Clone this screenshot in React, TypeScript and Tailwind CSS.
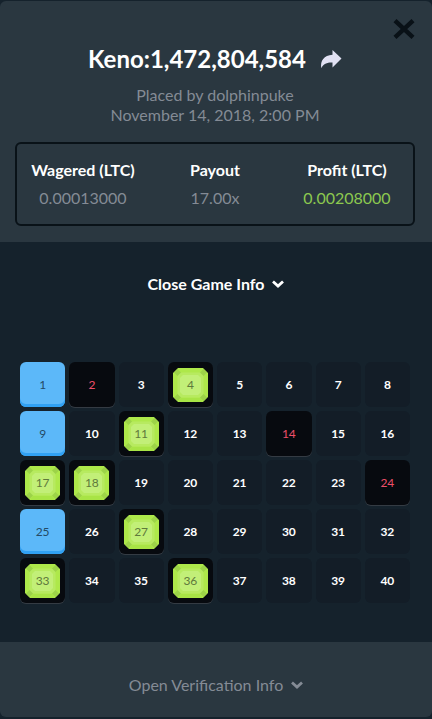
import { useState } from 'react';
import clsx from 'clsx';

interface Stat {
  label: string;
  value: string;
  highlight?: boolean;
}

const stats: Stat[] = [
  { label: 'Wagered (LTC)', value: '0.00013000' },
  { label: 'Payout', value: '17.00x' },
  { label: 'Profit (LTC)', value: '0.00208000', highlight: true }
];

const tiles = Array.from({ length: 40 }, (_, i) => i + 1);
const picked = [1, 4, 9, 11, 17, 18, 25, 27, 33, 36];
const drawn = [2, 4, 11, 14, 17, 18, 24, 27, 33, 36];

const ShareIcon = () => (
  <svg viewBox="0 0 22 20" className="w-[22px] h-5" fill="#e1e1f3" aria-hidden="true">
    <path d="M12.5 1 21.5 9.5 12.5 18.5V13.4C7.5 13.2 3.4 14.4 1.3 19.2 0 12 4 6.2 12.5 5.8Z" />
  </svg>
);

const CloseIcon = () => (
  <svg viewBox="0 0 22 20" className="w-[22px] h-5" stroke="#091117" strokeWidth="4.4" aria-hidden="true">
    <path d="M2 1.6 20 18.4M20 1.6 2 18.4" />
  </svg>
);

const ChevronIcon = () => (
  <svg viewBox="0 0 12 8" className="w-3 h-2" fill="none" stroke="currentColor" strokeWidth="2.8" aria-hidden="true">
    <path d="M1 1.5 6 6 11 1.5" />
  </svg>
);

const Gem = () => (
  <svg viewBox="0 0 35 34" className="absolute inset-0 m-auto w-[35px] h-[34px]" aria-hidden="true">
    <path d="M5 0H30L35 5V29L30 34H5L0 29V5Z" fill="#aee84a" />
    <path d="M5 34H30L27 30H8Z" fill="#a8e445" />
    <path d="M4.5 1 1 4.5 5 8.5 8.5 5ZM30.5 1 34 4.5 30 8.5 26.5 5ZM4.5 33 1 29.5 5 25.5 8.5 29ZM30.5 33 34 29.5 30 25.5 26.5 29Z" fill="#9dd348" />
    <path d="M8 4.5H27L30.5 8V26L27 29.5H8L4.5 26V8Z" fill="#b7ea60" />
    <path d="M10 7H25L28 10V24L25 27H10L7 24V10Z" fill="#c2ef78" />
  </svg>
);

const Tile = ({ number }: { number: number }) => {
  const isPicked = picked.includes(number);
  const isDrawn = drawn.includes(number);
  const isHit = isPicked && isDrawn;

  return (
    <button
      type="button"
      className={clsx(
        'relative h-[45px] rounded-md text-xs',
        isDrawn && 'bg-[#070a0f] shadow-[0_1px_0_#343b43]',
        isHit && 'text-[#5f793c]',
        isDrawn && !isPicked && 'text-[#ed4f69]',
        isPicked && !isDrawn && 'bg-[#5cb8f9] text-[#244a66] shadow-[inset_0_-3px_0_#31a1f3]',
        !isPicked && !isDrawn && 'bg-[#131d27] font-bold text-white'
      )}
    >
      {isHit && <Gem />}
      <span className="relative">{number}</span>
    </button>
  );
};

const App = () => {
  const [showGame, setShowGame] = useState(true);
  const [showVerification, setShowVerification] = useState(false);

  return (
    <div className="bg-[#15222c] pt-px pb-0.5 font-[Lato,sans-serif]">
      <div className="rounded-md bg-[#2a3740] overflow-hidden">
        <header className="relative pl-[15px] pr-[17px] pt-11 pb-4 text-center">
          <button type="button" aria-label="Close" className="absolute right-[17px] top-[18px]">
            <CloseIcon />
          </button>
          <div className="flex items-center justify-center gap-3.5">
            <h1 className="text-2xl leading-7 font-bold text-white">Keno:1,472,804,584</h1>
            <button type="button" aria-label="Share">
              <ShareIcon />
            </button>
          </div>
          <p className="mt-3 text-base leading-5 text-[#848b95]">
            Placed by dolphinpuke
            <br />
            November 14, 2018, 2:00 PM
          </p>
          <dl className="mt-[17px] grid grid-cols-3 rounded-md border-2 border-[#091218] pt-4 pb-4">
            {stats.map((stat) => (
              <div key={stat.label}>
                <dt className="text-base leading-5 font-bold text-white">{stat.label}</dt>
                <dd className={clsx('mt-2 text-base leading-5', stat.highlight ? 'text-[#8cc84f]' : 'text-[#848b95]')}>
                  {stat.value}
                </dd>
              </div>
            ))}
          </dl>
        </header>

        <section className="bg-[#15222c] pt-8 pb-[39px]">
          <button
            type="button"
            onClick={() => setShowGame(!showGame)}
            className="mx-auto flex items-center gap-2 text-base leading-5 font-bold text-white"
          >
            Close Game Info
            <ChevronIcon />
          </button>
          {showGame && (
            <div className="mt-[68px] grid grid-cols-8 gap-1 pl-5 pr-[22px]">
              {tiles.map((number) => (
                <Tile key={number} number={number} />
              ))}
            </div>
          )}
        </section>

        <footer className="pt-[33px] pb-[22px]">
          <button
            type="button"
            onClick={() => setShowVerification(!showVerification)}
            className="mx-auto flex items-center gap-2 text-base leading-5 text-[#848b95]"
          >
            Open Verification Info
            <ChevronIcon />
          </button>
        </footer>
      </div>
    </div>
  );
};

export default App;
